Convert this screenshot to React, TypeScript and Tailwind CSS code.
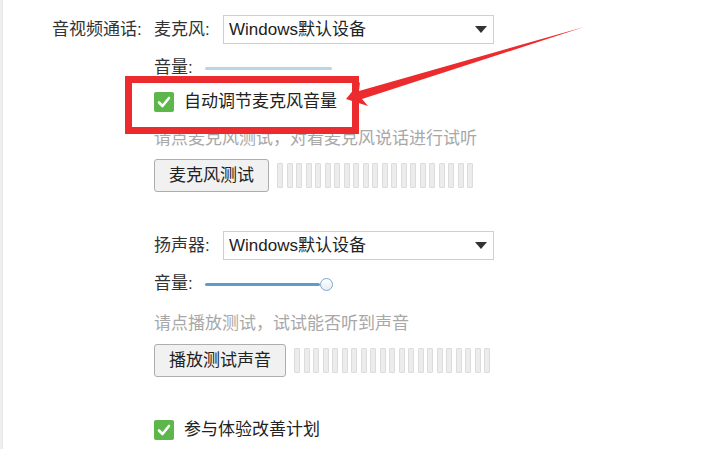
import React from "react";

const font = {
  fontFamily: '"Liberation Sans", "Noto Sans CJK SC", sans-serif',
};

function Select({ value }: { value: string }) {
  return (
    <div className="w-[271px] h-[29px] border border-[#cfcfcf] bg-white flex items-center justify-between pl-[5px] pr-[6px]">
      <span className="text-[17px] leading-[24px] text-[#222]">{value}</span>
      <svg width="12" height="7" viewBox="0 0 12 7" aria-hidden="true">
        <polygon points="0,0 12,0 6,7" fill="#333" />
      </svg>
    </div>
  );
}

function Slider({ active }: { active: boolean }) {
  return (
    <div className="w-[128px] h-[14px] flex items-center">
      {active ? (
        <>
          <div className="w-[115px] h-[3px] rounded-full bg-[#5b9dd3]" />
          <div className="w-[13px] h-[13px] rounded-full border border-[#7ea8cf] bg-gradient-to-b from-white to-[#e6edf5]" />
        </>
      ) : (
        <div className="w-[127px] h-[3px] rounded-full bg-[#b7d5ec]" />
      )}
    </div>
  );
}

function LevelBars() {
  return (
    <div className="flex gap-[3.5px]">
      {Array.from({ length: 21 }).map((_, i) => (
        <div
          key={i}
          className="w-[6px] h-[25px] rounded-[1px] border border-[#dcdcdc] bg-[#ececec]"
        />
      ))}
    </div>
  );
}

function Check({ label }: { label: string }) {
  return (
    <div className="flex items-center gap-[10px] h-[24px]">
      <div className="w-[20px] h-[20px] rounded-[2px] bg-[#5cb64a] flex items-center justify-center">
        <svg width="14" height="12" viewBox="0 0 14 12" aria-hidden="true">
          <polyline
            points="2,6.5 5.5,10 12,2"
            fill="none"
            stroke="#fff"
            strokeWidth="2.6"
            strokeLinecap="round"
            strokeLinejoin="round"
          />
        </svg>
      </div>
      <span className="text-[17px] leading-[24px] text-[#222]">{label}</span>
    </div>
  );
}

function TestButton({ label }: { label: string }) {
  return (
    <button className="h-[33px] px-[14px] border border-[#adadad] rounded-[3px] bg-[#f1f1f1] text-[17px] leading-[24px] text-[#222]">
      {label}
    </button>
  );
}

export default function App() {
  return (
    <div
      className="relative w-[710px] h-[449px] bg-white overflow-hidden flex text-[#333]"
      style={font}
    >
      {/* left edge */}
      <div className="w-[3px] h-full bg-[#efefef] border-r border-[#e6e6e6]" />

      <div className="flex pl-[49px] pt-[15px]">
        <div className="w-[102px] h-[29px] flex items-center text-[17px] leading-[24px]">
          音视频通话:
        </div>

        <div className="flex flex-col">
          {/* microphone */}
          <div className="flex items-center h-[29px]">
            <span className="w-[69px] text-[17px] leading-[24px]">麦克风:</span>
            <Select value="Windows默认设备" />
          </div>
          <div className="flex items-center h-[24px] mt-[12px]">
            <span className="w-[51px] text-[17px] leading-[24px]">音量:</span>
            <Slider active={false} />
          </div>
          <div className="mt-[10px]">
            <Check label="自动调节麦克风音量" />
          </div>
          <div className="mt-[13px] h-[24px] text-[17px] leading-[24px] text-[#a8a8a8]">
            请点麦克风测试，对看麦克风说话进行试听
          </div>
          <div className="mt-[8px] flex items-center gap-[8px]">
            <TestButton label="麦克风测试" />
            <LevelBars />
          </div>

          {/* speaker */}
          <div className="flex items-center h-[29px] mt-[39px]">
            <span className="w-[69px] text-[17px] leading-[24px]">扬声器:</span>
            <Select value="Windows默认设备" />
          </div>
          <div className="flex items-center h-[24px] mt-[12px]">
            <span className="w-[51px] text-[17px] leading-[24px]">音量:</span>
            <Slider active={true} />
          </div>
          <div className="mt-[16px] h-[24px] text-[17px] leading-[24px] text-[#a8a8a8]">
            请点播放测试，试试能否听到声音
          </div>
          <div className="mt-[8px] flex items-center gap-[8px]">
            <TestButton label="播放测试声音" />
            <LevelBars />
          </div>

          <div className="mt-[41px]">
            <Check label="参与体验改善计划" />
          </div>
        </div>
      </div>

      {/* annotation: red frame */}
      <div className="absolute left-[125px] top-[76px] w-[234px] h-[58px] border-[7px] border-[#ec2b2e]" />

      {/* annotation: arrow */}
      <svg
        className="absolute left-0 top-0"
        width="710"
        height="449"
        viewBox="0 0 710 449"
        aria-hidden="true"
      >
        <polygon
          points="346,99 360,82 359,91 584,27 362,99 368,106"
          fill="#ec2b2e"
        />
      </svg>
    </div>
  );
}
